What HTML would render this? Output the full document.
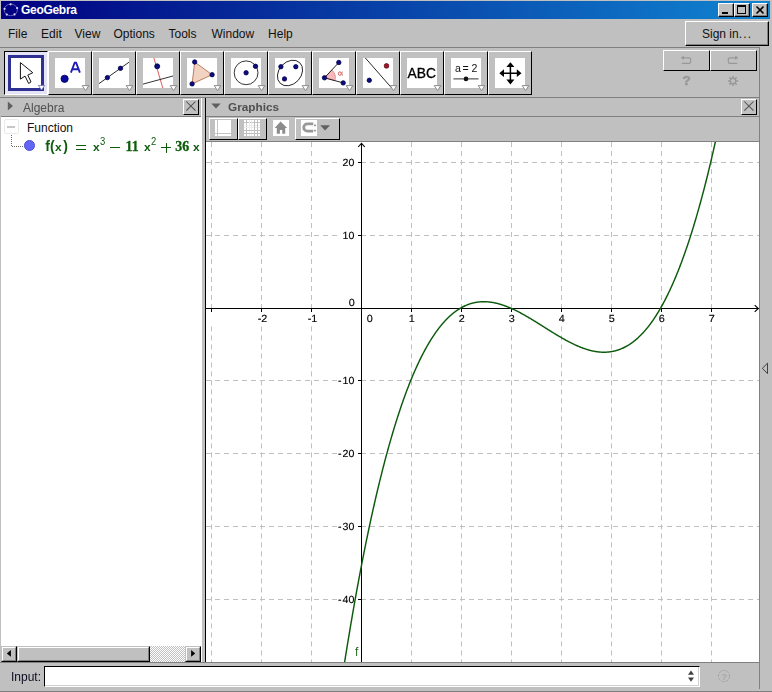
<!DOCTYPE html>
<html><head><meta charset="utf-8"><title>GeoGebra</title>
<style>
*{margin:0;padding:0;box-sizing:border-box}
html,body{width:772px;height:692px;overflow:hidden;background:#c0c0c0}
body{position:relative;font-family:"Liberation Sans",sans-serif;font-size:12px;color:#111}
.a{position:absolute}
.t{position:absolute;white-space:nowrap;line-height:1}
.raised{position:absolute;border-top:1px solid #fff;border-left:1px solid #fff;border-right:1px solid #000;border-bottom:1px solid #000;background:#c0c0c0}
.sunk{position:absolute;border-top:1px solid #000;border-left:1px solid #000;border-right:1px solid #fff;border-bottom:1px solid #fff}
.ln{position:absolute;background:#808080}
svg{position:absolute;overflow:visible}
</style></head>
<body>
<div class="a" style="left:1px;top:1px;width:769px;height:18px;background:linear-gradient(to right,#000080,#1084d0)"></div>
<svg style="left:2px;top:2px" width="18" height="16" viewBox="0 0 18 16"><ellipse cx="8.8" cy="7.9" rx="6.6" ry="5.8" fill="none" stroke="#6a6ab8" stroke-width="0.9"/><circle cx="8.6" cy="2.3" r="1.1" fill="#d8d8ff"/><circle cx="15.1" cy="6.1" r="1.1" fill="#d8d8ff"/><circle cx="12.5" cy="12.4" r="1.1" fill="#d8d8ff"/><circle cx="4.8" cy="12.6" r="1.1" fill="#d8d8ff"/><circle cx="2.6" cy="6.8" r="1.1" fill="#d8d8ff"/></svg>
<div class="t" style="left:21px;top:4px;font-size:12px;letter-spacing:-0.3px;font-weight:bold;color:#fff">GeoGebra</div>
<div class="a" style="left:718px;top:3px;width:16px;height:14px;background:#c0c0c0;border-top:1px solid #fff;border-left:1px solid #fff;border-right:1px solid #000;border-bottom:1px solid #000"><div class="a" style="left:0;top:0;width:14px;height:12px;border-right:1px solid #808080;border-bottom:1px solid #808080"></div><div class="a" style="left:3px;top:8px;width:6px;height:2px;background:#000"></div></div>
<div class="a" style="left:734px;top:3px;width:16px;height:14px;background:#c0c0c0;border-top:1px solid #fff;border-left:1px solid #fff;border-right:1px solid #000;border-bottom:1px solid #000"><div class="a" style="left:0;top:0;width:14px;height:12px;border-right:1px solid #808080;border-bottom:1px solid #808080"></div><div class="a" style="left:2px;top:1px;width:9px;height:9px;border:1px solid #000;border-top:2px solid #000"></div></div>
<div class="a" style="left:752px;top:3px;width:16px;height:14px;background:#c0c0c0;border-top:1px solid #fff;border-left:1px solid #fff;border-right:1px solid #000;border-bottom:1px solid #000"><div class="a" style="left:0;top:0;width:14px;height:12px;border-right:1px solid #808080;border-bottom:1px solid #808080"></div><svg style="left:0;top:0" width="14" height="12"><path d="M3.5 2.5 L10.5 9.5 M10.5 2.5 L3.5 9.5" stroke="#000" stroke-width="1.6" fill="none"/></svg></div>
<div class="t" style="left:8.0px;top:28px;font-size:12px">File</div>
<div class="t" style="left:41.1px;top:28px;font-size:12px">Edit</div>
<div class="t" style="left:74.5px;top:28px;font-size:12px">View</div>
<div class="t" style="left:113.5px;top:28px;font-size:12px">Options</div>
<div class="t" style="left:168.5px;top:28px;font-size:12px">Tools</div>
<div class="t" style="left:211.5px;top:28px;font-size:12px">Window</div>
<div class="t" style="left:268.1px;top:28px;font-size:12px">Help</div>
<div class="raised" style="left:685px;top:21px;width:84px;height:25px"><div class="a" style="left:0;top:0;right:0;bottom:0;border-right:1px solid #808080;border-bottom:1px solid #808080"></div></div>
<div class="t" style="left:702px;top:28px;font-size:12px">Sign in<span style="letter-spacing:1.2px">...</span></div>
<div class="ln" style="left:0;top:47px;width:760px;height:1px"></div>
<div class="ln" style="left:0;top:97px;width:760px;height:1px"></div>
<div class="ln" style="left:759px;top:47px;width:1px;height:642px"></div>
<div class="sunk" style="left:4px;top:51px;width:44px;height:44px;background:#e4e4f6"><div class="a" style="left:3px;top:3px;width:36px;height:36px;border:3px solid #2e3092;background:#fff"></div><svg style="left:6px;top:6px;will-change:transform" width="30" height="30" viewBox="0 0 30 30"><path d="M9.4 4.6 L9.4 21.1 L14.0 18.1 L17.7 25.5 L20.0 23.9 L16.8 17.1 L21.8 14.7 Z" fill="#fff" stroke="#111" stroke-width="1" stroke-linejoin="miter"/></svg><svg style="left:-1px;top:-1px" width="44" height="44" viewBox="0 0 44 44"><path d="M34.3 34.5 L40.7 34.5 L37.5 39 Z" fill="#fff" stroke="#7a7ab8" stroke-width="0.9"/></svg></div>
<div class="raised" style="left:48px;top:51px;width:44px;height:44px"><div class="a" style="left:6px;top:6px;width:30px;height:30px;background:#fff"></div><svg style="left:6px;top:6px;will-change:transform" width="30" height="30" viewBox="0 0 30 30"><circle cx="9.6" cy="20.8" r="3.6" fill="#0a0aa0" stroke="#000060" stroke-width="0.9"/><path d="M15.9 14.7 L19.7 4.6 L21.1 4.6 L24.9 14.7 M17.3 11.2 H23.5" fill="none" stroke="#1c1cb8" stroke-width="1.85" stroke-linejoin="miter"/></svg><svg style="left:-1px;top:-1px" width="44" height="44" viewBox="0 0 44 44"><path d="M34.2 34.6 L40.8 34.6 L37.5 39.6 Z" fill="#fff" stroke="#808080" stroke-width="0.9"/></svg></div>
<div class="raised" style="left:92px;top:51px;width:44px;height:44px"><div class="a" style="left:6px;top:6px;width:30px;height:30px;background:#fff"></div><svg style="left:6px;top:6px;will-change:transform" width="30" height="30" viewBox="0 0 30 30"><path d="M0 25.6 L30 4.2" stroke="#111" stroke-width="0.9"/><circle cx="8.4" cy="19.6" r="2.2" fill="#0c0c80" stroke="#000048" stroke-width="0.8"/><circle cx="21.5" cy="10.3" r="2.2" fill="#0c0c80" stroke="#000048" stroke-width="0.8"/></svg><svg style="left:-1px;top:-1px" width="44" height="44" viewBox="0 0 44 44"><path d="M34.2 34.6 L40.8 34.6 L37.5 39.6 Z" fill="#fff" stroke="#808080" stroke-width="0.9"/></svg></div>
<div class="raised" style="left:136px;top:51px;width:44px;height:44px"><div class="a" style="left:6px;top:6px;width:30px;height:30px;background:#fff"></div><svg style="left:6px;top:6px;will-change:transform" width="30" height="30" viewBox="0 0 30 30"><path d="M10.9 0 L19.8 30" stroke="#d84040" stroke-width="0.85"/><path d="M0 26.1 L30 18" stroke="#111" stroke-width="0.85"/><circle cx="14.2" cy="8.3" r="2.5" fill="#0c0c80" stroke="#000048" stroke-width="0.8"/></svg><svg style="left:-1px;top:-1px" width="44" height="44" viewBox="0 0 44 44"><path d="M34.2 34.6 L40.8 34.6 L37.5 39.6 Z" fill="#fff" stroke="#808080" stroke-width="0.9"/></svg></div>
<div class="raised" style="left:180px;top:51px;width:44px;height:44px"><div class="a" style="left:6px;top:6px;width:30px;height:30px;background:#fff"></div><svg style="left:6px;top:6px;will-change:transform" width="30" height="30" viewBox="0 0 30 30"><path d="M7.7 4 L25.1 16.7 L5.1 25.9 Z" fill="#f2d3c2" stroke="#b06a44" stroke-width="0.85"/><circle cx="7.7" cy="4.0" r="2.2" fill="#0c0c80" stroke="#000048" stroke-width="0.8"/><circle cx="25.1" cy="16.7" r="2.2" fill="#0c0c80" stroke="#000048" stroke-width="0.8"/><circle cx="5.1" cy="25.9" r="2.2" fill="#0c0c80" stroke="#000048" stroke-width="0.8"/></svg><svg style="left:-1px;top:-1px" width="44" height="44" viewBox="0 0 44 44"><path d="M34.2 34.6 L40.8 34.6 L37.5 39.6 Z" fill="#fff" stroke="#808080" stroke-width="0.9"/></svg></div>
<div class="raised" style="left:224px;top:51px;width:44px;height:44px"><div class="a" style="left:6px;top:6px;width:30px;height:30px;background:#fff"></div><svg style="left:6px;top:6px;will-change:transform" width="30" height="30" viewBox="0 0 30 30"><circle cx="15.1" cy="14.8" r="11.9" fill="none" stroke="#111" stroke-width="0.85"/><circle cx="15.1" cy="14.8" r="2.2" fill="#0c0c80" stroke="#000048" stroke-width="0.8"/><circle cx="24.5" cy="8.3" r="2.2" fill="#0c0c80" stroke="#000048" stroke-width="0.8"/></svg><svg style="left:-1px;top:-1px" width="44" height="44" viewBox="0 0 44 44"><path d="M34.2 34.6 L40.8 34.6 L37.5 39.6 Z" fill="#fff" stroke="#808080" stroke-width="0.9"/></svg></div>
<div class="raised" style="left:268px;top:51px;width:44px;height:44px"><div class="a" style="left:6px;top:6px;width:30px;height:30px;background:#fff"></div><svg style="left:6px;top:6px;will-change:transform" width="30" height="30" viewBox="0 0 30 30"><ellipse cx="15" cy="15" rx="14.2" ry="11.0" transform="rotate(-47 15 15)" fill="none" stroke="#111" stroke-width="0.85"/><circle cx="5.9" cy="8.7" r="2.2" fill="#0c0c80" stroke="#000048" stroke-width="0.8"/><circle cx="20.8" cy="8.7" r="2.2" fill="#0c0c80" stroke="#000048" stroke-width="0.8"/><circle cx="9.5" cy="20.9" r="2.2" fill="#0c0c80" stroke="#000048" stroke-width="0.8"/></svg><svg style="left:-1px;top:-1px" width="44" height="44" viewBox="0 0 44 44"><path d="M34.2 34.6 L40.8 34.6 L37.5 39.6 Z" fill="#fff" stroke="#808080" stroke-width="0.9"/></svg></div>
<div class="raised" style="left:312px;top:51px;width:44px;height:44px"><div class="a" style="left:6px;top:6px;width:30px;height:30px;background:#fff"></div><svg style="left:6px;top:6px;will-change:transform" width="30" height="30" viewBox="0 0 30 30"><path d="M5.5 19.8 L12.87 11.91 A10.8 10.8 0 0 1 15.92 22.64 Z" fill="#f6b8b8" stroke="#dc8080" stroke-width="0.8"/><path d="M19.8 4.5 L5.5 19.8 L24.2 24.9" fill="none" stroke="#111" stroke-width="0.9"/><circle cx="5.5" cy="19.8" r="2.2" fill="#0c0c80" stroke="#000048" stroke-width="0.8"/><circle cx="19.8" cy="4.5" r="2.2" fill="#0c0c80" stroke="#000048" stroke-width="0.8"/><circle cx="24.2" cy="24.9" r="2.2" fill="#0c0c80" stroke="#000048" stroke-width="0.8"/><ellipse cx="20.8" cy="15.6" rx="1.45" ry="1.75" fill="none" stroke="#cc4848" stroke-width="0.9"/><path d="M23.2 13.6 Q22.3 15.6 23.5 17.5" fill="none" stroke="#cc4848" stroke-width="0.8"/></svg><svg style="left:-1px;top:-1px" width="44" height="44" viewBox="0 0 44 44"><path d="M34.2 34.6 L40.8 34.6 L37.5 39.6 Z" fill="#fff" stroke="#808080" stroke-width="0.9"/></svg></div>
<div class="raised" style="left:356px;top:51px;width:44px;height:44px"><div class="a" style="left:6px;top:6px;width:30px;height:30px;background:#fff"></div><svg style="left:6px;top:6px;will-change:transform" width="30" height="30" viewBox="0 0 30 30"><path d="M2.4 0 L28.7 30" stroke="#111" stroke-width="0.9"/><circle cx="23.5" cy="7.9" r="2.3" fill="#a01828" stroke="#600010" stroke-width="0.8"/><circle cx="6.3" cy="22.3" r="2.2" fill="#0c0c80" stroke="#000048" stroke-width="0.8"/></svg><svg style="left:-1px;top:-1px" width="44" height="44" viewBox="0 0 44 44"><path d="M34.2 34.6 L40.8 34.6 L37.5 39.6 Z" fill="#fff" stroke="#808080" stroke-width="0.9"/></svg></div>
<div class="raised" style="left:400px;top:51px;width:44px;height:44px"><div class="a" style="left:6px;top:6px;width:30px;height:30px;background:#fff"></div><svg style="left:6px;top:6px;will-change:transform" width="30" height="30" viewBox="0 0 30 30"><text x="0.6" y="19.9" font-family="Liberation Sans" font-size="13.8" fill="#000" stroke="#000" stroke-width="0.3">ABC</text></svg><svg style="left:-1px;top:-1px" width="44" height="44" viewBox="0 0 44 44"><path d="M34.2 34.6 L40.8 34.6 L37.5 39.6 Z" fill="#fff" stroke="#808080" stroke-width="0.9"/></svg></div>
<div class="raised" style="left:444px;top:51px;width:44px;height:44px"><div class="a" style="left:6px;top:6px;width:30px;height:30px;background:#fff"></div><svg style="left:6px;top:6px;will-change:transform" width="30" height="30" viewBox="0 0 30 30"><text x="3.9" y="14" font-family="Liberation Sans" font-size="10.6" fill="#111">a</text><text x="11.6" y="13.6" font-family="Liberation Sans" font-size="10.6" fill="#111">=</text><text x="20.6" y="14" font-family="Liberation Sans" font-size="10.6" fill="#111">2</text><path d="M2.4 20.9 L27.5 20.9" stroke="#333" stroke-width="1"/><circle cx="15" cy="20.9" r="2.3" fill="#111"/></svg><svg style="left:-1px;top:-1px" width="44" height="44" viewBox="0 0 44 44"><path d="M34.2 34.6 L40.8 34.6 L37.5 39.6 Z" fill="#fff" stroke="#808080" stroke-width="0.9"/></svg></div>
<div class="raised" style="left:488px;top:51px;width:44px;height:44px"><div class="a" style="left:6px;top:6px;width:30px;height:30px;background:#fff"></div><svg style="left:6px;top:6px;will-change:transform" width="30" height="30" viewBox="0 0 30 30"><path d="M15.4 6 L15.4 25 M6 15.2 L25 15.2" stroke="#000" stroke-width="1.5"/><path d="M15.4 4.2 L19.4 9 L11.4 9 Z M15.4 26.4 L19.4 21.6 L11.4 21.6 Z M4.3 15.2 L9 11.3 L9 19.1 Z M26.5 15.2 L21.8 11.3 L21.8 19.1 Z" fill="#000"/></svg><svg style="left:-1px;top:-1px" width="44" height="44" viewBox="0 0 44 44"><path d="M34.2 34.6 L40.8 34.6 L37.5 39.6 Z" fill="#fff" stroke="#808080" stroke-width="0.9"/></svg></div>
<div class="raised" style="left:663px;top:50px;width:47px;height:21px"></div>
<div class="raised" style="left:710px;top:50px;width:47px;height:21px"></div>
<svg style="left:680px;top:55px" width="12" height="10" viewBox="0 0 12 10"><path d="M3.5 2.8 H9 Q10.7 2.8 10.7 4.4 V6.7 Q10.7 8.3 9 8.3 H1.8" fill="none" stroke="#989898" stroke-width="1.2"/><path d="M0.7 2.8 L3.9 0.6 L3.9 5 Z" fill="#989898"/></svg>
<svg style="left:727px;top:55px" width="12" height="10" viewBox="0 0 12 10"><path d="M8.5 2.8 H3 Q1.3 2.8 1.3 4.4 V6.7 Q1.3 8.3 3 8.3 H10.2" fill="none" stroke="#989898" stroke-width="1.2"/><path d="M11.3 2.8 L8.1 0.6 L8.1 5 Z" fill="#989898"/></svg>
<div class="t" style="left:682.6px;top:73.5px;font-size:13.5px;font-weight:bold;color:#989898;-webkit-text-stroke:0.5px #989898">?</div>
<svg style="left:727px;top:75px" width="12" height="12" viewBox="0 0 12 12"><path d="M8.80 6.00 L11.10 6.00 M7.98 7.98 L9.61 9.61 M6.00 8.80 L6.00 11.10 M4.02 7.98 L2.39 9.61 M3.20 6.00 L0.90 6.00 M4.02 4.02 L2.39 2.39 M6.00 3.20 L6.00 0.90 M7.98 4.02 L9.61 2.39 " stroke="#989898" stroke-width="1.5" fill="none"/><circle cx="6" cy="6" r="2.7" fill="#c0c0c0" stroke="#989898" stroke-width="1.3"/></svg>
<svg style="left:7px;top:101px" width="7" height="10" viewBox="0 0 7 10"><path d="M0.8 0.4 L6 5 L0.8 9.6 Z" fill="#606060"/></svg>
<div class="t" style="left:23px;top:102px;font-size:12px;color:#505050">Algebra</div>
<div class="raised" style="left:183px;top:99px;width:16px;height:16px"><svg style="left:0;top:0" width="14" height="14"><path d="M2.3 1.5 L11.5 10.7 M11.5 1.5 L2.3 10.7" stroke="#505050" stroke-width="1.05" fill="none"/></svg></div>
<div class="ln" style="left:1px;top:116px;width:200px;height:1px"></div>
<div class="a" style="left:1px;top:117px;width:201px;height:545px;background:#fff"></div>
<div class="a" style="left:4px;top:119px;width:15px;height:15px;border:1px solid #eaeaea;border-radius:2px"></div>
<div class="a" style="left:7px;top:126px;width:8px;height:2px;background:#c8c8c8"></div>
<div class="t" style="left:27px;top:122px;font-size:12px;color:#111">Function</div>
<svg style="left:0;top:0" width="30" height="160"><path d="M11.5 135 L11.5 146.5 L23 146.5" fill="none" stroke="#6c6c6c" stroke-width="1" stroke-dasharray="1 1"/></svg>
<div class="a" style="left:24.3px;top:140.2px;width:10.6px;height:10.6px;border-radius:50%;background:#6565f5;border:0.6px solid #5050d0"></div>
<div class="t" style="left:45.3px;top:136.0px;font-size:14.0px;line-height:20px;height:20px;font-family:'Liberation Sans',sans-serif;font-weight:bold;color:#0c5c0c;">f</div>
<div class="t" style="left:50.0px;top:136.0px;font-size:14.0px;line-height:20px;height:20px;font-family:'Liberation Sans',sans-serif;font-weight:bold;color:#0c5c0c;">(</div>
<div class="t" style="left:55.4px;top:136.9px;font-size:11.5px;line-height:20px;height:20px;font-family:'Liberation Sans',sans-serif;font-weight:bold;color:#0c5c0c;transform:scaleX(1.04);transform-origin:0 50%;">x</div>
<div class="t" style="left:63.3px;top:136.0px;font-size:14.0px;line-height:20px;height:20px;font-family:'Liberation Sans',sans-serif;font-weight:bold;color:#0c5c0c;">)</div>
<div class="a" style="left:76px;top:145px;width:10px;height:1px;background:#0c5c0c"></div><div class="a" style="left:76px;top:149px;width:10px;height:1px;background:#0c5c0c"></div>
<div class="t" style="left:92.8px;top:136.9px;font-size:11.5px;line-height:20px;height:20px;font-family:'Liberation Sans',sans-serif;font-weight:bold;color:#0c5c0c;transform:scaleX(1.04);transform-origin:0 50%;">x</div>
<div class="t" style="left:99.9px;top:131.9px;font-size:8.6px;line-height:20px;height:20px;font-family:'Liberation Sans',sans-serif;color:#0c5c0c;transform:scale(1.1,1.26);transform-origin:0% 65%;">3</div>
<div class="a" style="left:110px;top:147px;width:10px;height:1px;background:#0c5c0c"></div>
<div class="t" style="left:125.6px;top:136.7px;font-size:13.9px;line-height:20px;height:20px;font-family:'Liberation Serif',serif;font-weight:bold;color:#0c5c0c;-webkit-text-stroke:0.3px #0c5c0c;">11</div>
<div class="t" style="left:143.6px;top:136.9px;font-size:11.5px;line-height:20px;height:20px;font-family:'Liberation Sans',sans-serif;font-weight:bold;color:#0c5c0c;transform:scaleX(1.04);transform-origin:0 50%;">x</div>
<div class="t" style="left:151.3px;top:131.9px;font-size:8.6px;line-height:20px;height:20px;font-family:'Liberation Sans',sans-serif;color:#0c5c0c;transform:scale(1.1,1.26);transform-origin:0% 65%;">2</div>
<div class="a" style="left:161px;top:147px;width:10px;height:1px;background:#0c5c0c"></div><div class="a" style="left:165.5px;top:142.5px;width:1px;height:10px;background:#0c5c0c"></div>
<div class="t" style="left:175.2px;top:136.7px;font-size:13.9px;line-height:20px;height:20px;font-family:'Liberation Serif',serif;font-weight:bold;color:#0c5c0c;-webkit-text-stroke:0.3px #0c5c0c;">36</div>
<div class="t" style="left:193.1px;top:136.9px;font-size:11.5px;line-height:20px;height:20px;font-family:'Liberation Sans',sans-serif;font-weight:bold;color:#0c5c0c;transform:scaleX(1.04);transform-origin:0 50%;">x</div>
<div class="a" style="left:1px;top:646px;width:200px;height:16px;background:#c0c0c0"></div>
<div class="a" style="left:150px;top:646px;width:35px;height:16px;background-color:#fff;background-image:linear-gradient(45deg,#c0c0c0 25%,transparent 25%,transparent 75%,#c0c0c0 75%),linear-gradient(45deg,#c0c0c0 25%,transparent 25%,transparent 75%,#c0c0c0 75%);background-size:2px 2px;background-position:0 0,1px 1px"></div>
<div style="position:absolute;top:646px;height:16px;background:#c0c0c0;border-top:1px solid #c0c0c0;border-left:1px solid #c0c0c0;border-right:1px solid #000;border-bottom:1px solid #000;left:1px;width:16px"><div class="a" style="left:0;top:0;right:0;bottom:0;border-top:1px solid #fff;border-left:1px solid #fff;border-right:1px solid #808080;border-bottom:1px solid #808080"></div><svg style="left:0;top:0" width="14" height="14"><path d="M4.8 6.4 L8.9 3 L8.9 9.8 Z" fill="#000"/></svg></div>
<div style="position:absolute;top:646px;height:16px;background:#c0c0c0;border-top:1px solid #c0c0c0;border-left:1px solid #c0c0c0;border-right:1px solid #000;border-bottom:1px solid #000;left:17px;width:133px"><div class="a" style="left:0;top:0;right:0;bottom:0;border-top:1px solid #fff;border-left:1px solid #fff;border-right:1px solid #808080;border-bottom:1px solid #808080"></div></div>
<div style="position:absolute;top:646px;height:16px;background:#c0c0c0;border-top:1px solid #c0c0c0;border-left:1px solid #c0c0c0;border-right:1px solid #000;border-bottom:1px solid #000;left:185px;width:16px"><div class="a" style="left:0;top:0;right:0;bottom:0;border-top:1px solid #fff;border-left:1px solid #fff;border-right:1px solid #808080;border-bottom:1px solid #808080"></div><svg style="left:0;top:0" width="14" height="14"><path d="M9.2 6.4 L5.1 3 L5.1 9.8 Z" fill="#000"/></svg></div>
<div class="a" style="left:201px;top:98px;width:1px;height:564px;background:#fff"></div>
<div class="a" style="left:205px;top:98px;width:1px;height:564px;background:#000"></div>
<svg style="left:211px;top:103px" width="10" height="6" viewBox="0 0 10 6"><path d="M0.3 0.5 L9.7 0.5 L5 5.4 Z" fill="#606060"/></svg>
<div class="t" style="left:228px;top:102px;font-size:11.8px;font-weight:bold;color:#505050">Graphics</div>
<div class="raised" style="left:741px;top:99px;width:16px;height:16px"><svg style="left:0;top:0" width="14" height="14"><path d="M2.3 1.5 L11.5 10.7 M11.5 1.5 L2.3 10.7" stroke="#505050" stroke-width="1.05" fill="none"/></svg></div>
<div class="ln" style="left:206px;top:116px;width:553px;height:1px"></div>
<div class="raised" style="left:209px;top:118px;width:29px;height:22px"><div class="a" style="left:5px;top:1px;width:16px;height:16px;background:#fff"></div><div class="a" style="left:7px;top:1px;width:1px;height:16px;background:#c4c4c4"></div><div class="a" style="left:5px;top:14px;width:16px;height:1px;background:#c4c4c4"></div></div>
<div class="raised" style="left:238px;top:118px;width:29px;height:22px"><div class="a" style="left:5px;top:1px;width:16px;height:16px;background:#fff"></div><div class="a" style="left:7px;top:1px;width:1px;height:16px;background:#c0c0c0"></div><div class="a" style="left:5px;top:3px;width:16px;height:1px;background:#c0c0c0"></div><div class="a" style="left:10px;top:1px;width:1px;height:16px;background:#ececec"></div><div class="a" style="left:5px;top:6px;width:16px;height:1px;background:#ececec"></div><div class="a" style="left:12px;top:1px;width:1px;height:16px;background:#ececec"></div><div class="a" style="left:5px;top:8px;width:16px;height:1px;background:#ececec"></div><div class="a" style="left:15px;top:1px;width:1px;height:16px;background:#c0c0c0"></div><div class="a" style="left:5px;top:11px;width:16px;height:1px;background:#c0c0c0"></div><div class="a" style="left:18px;top:1px;width:1px;height:16px;background:#c0c0c0"></div><div class="a" style="left:5px;top:14px;width:16px;height:1px;background:#c0c0c0"></div></div>
<div class="a" style="left:273px;top:120px;width:16px;height:16px;background:#fff"><svg style="left:0;top:0" width="16" height="16"><path d="M7.5 1.6 L14.2 8 L12.2 8 L12.2 13.7 L9.3 13.7 L9.3 10 L6.9 10 L6.9 13.7 L3.8 13.7 L3.8 8 L1.7 8 Z" fill="#8c8c8c"/></svg></div>
<div class="raised" style="left:295px;top:118px;width:45px;height:22px"><div class="a" style="left:5px;top:1px;width:16px;height:16px;background:#fff"></div><svg style="left:5px;top:1px" width="16" height="16"><path d="M12.3 3.8 H6.4 A3.7 3.7 0 0 0 6.4 11.2 H12.3" fill="none" stroke="#989898" stroke-width="2.8"/><rect x="13" y="4.6" width="2" height="1.6" fill="#989898"/><rect x="13" y="9.8" width="2" height="1.6" fill="#989898"/></svg><svg style="left:24px;top:6px" width="11" height="6"><path d="M0.2 0.3 L10 0.3 L5.1 5.4 Z" fill="#606060"/></svg></div>
<div class="ln" style="left:206px;top:141px;width:553px;height:1px"></div>
<svg style="left:206px;top:142px" width="553" height="520" viewBox="0 0 553 520"><rect x="0" y="0" width="553" height="520" fill="#fff"/><path d="M5.5 0 V166.5 M5.5 184.4 V520 M55.5 0 V166.5 M55.5 184.4 V520 M105.5 0 V166.5 M105.5 184.4 V520 M205.5 0 V166.5 M205.5 184.4 V520 M255.5 0 V166.5 M255.5 184.4 V520 M305.5 0 V166.5 M305.5 184.4 V520 M355.5 0 V166.5 M355.5 184.4 V520 M405.5 0 V166.5 M405.5 184.4 V520 M455.5 0 V166.5 M455.5 184.4 V520 M505.5 0 V166.5 M505.5 184.4 V520 M0 20.5 H132.0 M155.0 20.5 H553 M0 93.5 H132.0 M155.0 93.5 H553 M0 238.5 H132.0 M155.0 238.5 H553 M0 311.5 H132.0 M155.0 311.5 H553 M0 384.5 H132.0 M155.0 384.5 H553 M0 457.5 H132.0 M155.0 457.5 H553 " stroke="#c0c0c0" stroke-width="1" stroke-dasharray="5 4" fill="none"/><path d="M155.5 1.5 V520 M0 166.5 H552.5" stroke="#000" stroke-width="1" fill="none" shape-rendering="crispEdges"/><path d="M152.2 5 L155.5 1.3 L158.8 5 M548.7 163.1 L552.3 166.5 L548.7 169.9" stroke="#000" stroke-width="1.1" fill="none"/><path d="M5.5 166.5 v3.5 M55.5 166.5 v3.5 M105.5 166.5 v3.5 M205.5 166.5 v3.5 M255.5 166.5 v3.5 M305.5 166.5 v3.5 M355.5 166.5 v3.5 M405.5 166.5 v3.5 M455.5 166.5 v3.5 M505.5 166.5 v3.5 M155.5 20.5 h-3.5 M155.5 93.5 h-3.5 M155.5 238.5 h-3.5 M155.5 311.5 h-3.5 M155.5 384.5 h-3.5 M155.5 457.5 h-3.5 " stroke="#000" stroke-width="1" fill="none" shape-rendering="crispEdges"/></svg>
<div class="a" style="left:0;top:0;width:772px;height:692px;will-change:transform">
<div class="t" style="left:257.8px;top:315px;font-size:10.3px;color:#000;-webkit-text-stroke:0.15px #000;text-rendering:geometricPrecision;transform:scale(1.05,1)">-2</div>
<div class="t" style="left:307.8px;top:315px;font-size:10.3px;color:#000;-webkit-text-stroke:0.15px #000;text-rendering:geometricPrecision;transform:scale(1.05,1)">-1</div>
<div class="t" style="left:408.7px;top:315px;font-size:10.3px;color:#000;-webkit-text-stroke:0.15px #000;text-rendering:geometricPrecision;transform:scale(1.05,1)">1</div>
<div class="t" style="left:458.7px;top:315px;font-size:10.3px;color:#000;-webkit-text-stroke:0.15px #000;text-rendering:geometricPrecision;transform:scale(1.05,1)">2</div>
<div class="t" style="left:508.7px;top:315px;font-size:10.3px;color:#000;-webkit-text-stroke:0.15px #000;text-rendering:geometricPrecision;transform:scale(1.05,1)">3</div>
<div class="t" style="left:558.7px;top:315px;font-size:10.3px;color:#000;-webkit-text-stroke:0.15px #000;text-rendering:geometricPrecision;transform:scale(1.05,1)">4</div>
<div class="t" style="left:608.7px;top:315px;font-size:10.3px;color:#000;-webkit-text-stroke:0.15px #000;text-rendering:geometricPrecision;transform:scale(1.05,1)">5</div>
<div class="t" style="left:658.7px;top:315px;font-size:10.3px;color:#000;-webkit-text-stroke:0.15px #000;text-rendering:geometricPrecision;transform:scale(1.05,1)">6</div>
<div class="t" style="left:708.7px;top:315px;font-size:10.3px;color:#000;-webkit-text-stroke:0.15px #000;text-rendering:geometricPrecision;transform:scale(1.05,1)">7</div>
<div class="t" style="left:367.0px;top:315px;font-size:10.3px;color:#000;-webkit-text-stroke:0.15px #000;text-rendering:geometricPrecision;transform:scale(1.05,1)">0</div>
<div class="t" style="left:348.8px;top:299px;font-size:10.3px;color:#000;-webkit-text-stroke:0.15px #000;text-rendering:geometricPrecision;transform:scale(1.05,1)">0</div>
<div class="t" style="left:315px;top:158.5px;width:39.4px;text-align:right;font-size:10.3px;color:#000;-webkit-text-stroke:0.15px #000;text-rendering:geometricPrecision;transform:scale(1.03,1);transform-origin:100% 50%">20</div>
<div class="t" style="left:315px;top:231.5px;width:39.4px;text-align:right;font-size:10.3px;color:#000;-webkit-text-stroke:0.15px #000;text-rendering:geometricPrecision;transform:scale(1.03,1);transform-origin:100% 50%">10</div>
<div class="t" style="left:315px;top:376.5px;width:39.4px;text-align:right;font-size:10.3px;color:#000;-webkit-text-stroke:0.15px #000;text-rendering:geometricPrecision;transform:scale(1.03,1);transform-origin:100% 50%"><span style="letter-spacing:1px">-</span>10</div>
<div class="t" style="left:315px;top:449.5px;width:39.4px;text-align:right;font-size:10.3px;color:#000;-webkit-text-stroke:0.15px #000;text-rendering:geometricPrecision;transform:scale(1.03,1);transform-origin:100% 50%"><span style="letter-spacing:1px">-</span>20</div>
<div class="t" style="left:315px;top:522.5px;width:39.4px;text-align:right;font-size:10.3px;color:#000;-webkit-text-stroke:0.15px #000;text-rendering:geometricPrecision;transform:scale(1.03,1);transform-origin:100% 50%"><span style="letter-spacing:1px">-</span>30</div>
<div class="t" style="left:315px;top:595.5px;width:39.4px;text-align:right;font-size:10.3px;color:#000;-webkit-text-stroke:0.15px #000;text-rendering:geometricPrecision;transform:scale(1.03,1);transform-origin:100% 50%"><span style="letter-spacing:1px">-</span>40</div>
<div class="t" style="left:355px;top:646px;font-size:12px;color:#2a682a">f</div>
</div>
<svg style="left:206px;top:142px;overflow:hidden" width="553" height="520" viewBox="0 0 553 520"><path d="M134.60 546.03 L135.10 542.74 L135.60 539.48 L136.10 536.23 L136.60 532.99 L137.10 529.78 L137.60 526.58 L138.10 523.40 L138.60 520.24 L139.10 517.10 L139.60 513.97 L140.10 510.86 L140.60 507.77 L141.10 504.69 L141.60 501.63 L142.10 498.59 L142.60 495.57 L143.10 492.56 L143.60 489.57 L144.10 486.60 L144.60 483.64 L145.10 480.70 L145.60 477.78 L146.10 474.87 L146.60 471.98 L147.10 469.11 L147.60 466.25 L148.10 463.42 L148.60 460.59 L149.10 457.79 L149.60 455.00 L150.10 452.22 L150.60 449.47 L151.10 446.73 L151.60 444.00 L152.10 441.30 L152.60 438.60 L153.10 435.93 L153.60 433.27 L154.10 430.63 L154.60 428.00 L155.10 425.39 L155.60 422.79 L156.10 420.21 L156.60 417.65 L157.10 415.10 L157.60 412.57 L158.10 410.06 L158.60 407.56 L159.10 405.07 L159.60 402.60 L160.10 400.15 L160.60 397.71 L161.10 395.29 L161.60 392.88 L162.10 390.49 L162.60 388.11 L163.10 385.75 L163.60 383.41 L164.10 381.08 L164.60 378.76 L165.10 376.46 L165.60 374.18 L166.10 371.91 L166.60 369.65 L167.10 367.41 L167.60 365.19 L168.10 362.98 L168.60 360.78 L169.10 358.60 L169.60 356.44 L170.10 354.28 L170.60 352.15 L171.10 350.03 L171.60 347.92 L172.10 345.83 L172.60 343.75 L173.10 341.68 L173.60 339.63 L174.10 337.60 L174.60 335.58 L175.10 333.57 L175.60 331.58 L176.10 329.60 L176.60 327.64 L177.10 325.69 L177.60 323.75 L178.10 321.83 L178.60 319.92 L179.10 318.03 L179.60 316.15 L180.10 314.28 L180.60 312.43 L181.10 310.59 L181.60 308.76 L182.10 306.95 L182.60 305.15 L183.10 303.37 L183.60 301.60 L184.10 299.84 L184.60 298.10 L185.10 296.37 L185.60 294.65 L186.10 292.95 L186.60 291.26 L187.10 289.58 L187.60 287.91 L188.10 286.26 L188.60 284.62 L189.10 283.00 L189.60 281.39 L190.10 279.79 L190.60 278.20 L191.10 276.63 L191.60 275.07 L192.10 273.52 L192.60 271.98 L193.10 270.46 L193.60 268.95 L194.10 267.46 L194.60 265.97 L195.10 264.50 L195.60 263.04 L196.10 261.59 L196.60 260.16 L197.10 258.74 L197.60 257.33 L198.10 255.93 L198.60 254.54 L199.10 253.17 L199.60 251.81 L200.10 250.46 L200.60 249.12 L201.10 247.79 L201.60 246.48 L202.10 245.18 L202.60 243.89 L203.10 242.61 L203.60 241.35 L204.10 240.09 L204.60 238.85 L205.10 237.62 L205.60 236.40 L206.10 235.19 L206.60 234.00 L207.10 232.81 L207.60 231.64 L208.10 230.48 L208.60 229.32 L209.10 228.19 L209.60 227.06 L210.10 225.94 L210.60 224.83 L211.10 223.74 L211.60 222.66 L212.10 221.58 L212.60 220.52 L213.10 219.47 L213.60 218.43 L214.10 217.40 L214.60 216.38 L215.10 215.38 L215.60 214.38 L216.10 213.40 L216.60 212.42 L217.10 211.46 L217.60 210.50 L218.10 209.56 L218.60 208.62 L219.10 207.70 L219.60 206.79 L220.10 205.89 L220.60 205.00 L221.10 204.11 L221.60 203.24 L222.10 202.38 L222.60 201.53 L223.10 200.69 L223.60 199.86 L224.10 199.04 L224.60 198.23 L225.10 197.43 L225.60 196.63 L226.10 195.85 L226.60 195.08 L227.10 194.32 L227.60 193.57 L228.10 192.82 L228.60 192.09 L229.10 191.37 L229.60 190.65 L230.10 189.95 L230.60 189.25 L231.10 188.57 L231.60 187.89 L232.10 187.22 L232.60 186.57 L233.10 185.92 L233.60 185.28 L234.10 184.65 L234.60 184.03 L235.10 183.41 L235.60 182.81 L236.10 182.22 L236.60 181.63 L237.10 181.05 L237.60 180.48 L238.10 179.93 L238.60 179.38 L239.10 178.83 L239.60 178.30 L240.10 177.78 L240.60 177.26 L241.10 176.75 L241.60 176.25 L242.10 175.76 L242.60 175.28 L243.10 174.81 L243.60 174.34 L244.10 173.88 L244.60 173.43 L245.10 172.99 L245.60 172.56 L246.10 172.13 L246.60 171.72 L247.10 171.31 L247.60 170.91 L248.10 170.51 L248.60 170.13 L249.10 169.75 L249.60 169.38 L250.10 169.02 L250.60 168.66 L251.10 168.32 L251.60 167.98 L252.10 167.65 L252.60 167.32 L253.10 167.01 L253.60 166.70 L254.10 166.39 L254.60 166.10 L255.10 165.81 L255.60 165.53 L256.10 165.26 L256.60 164.99 L257.10 164.74 L257.60 164.48 L258.10 164.24 L258.60 164.00 L259.10 163.77 L259.60 163.55 L260.10 163.33 L260.60 163.12 L261.10 162.92 L261.60 162.72 L262.10 162.53 L262.60 162.35 L263.10 162.17 L263.60 162.00 L264.10 161.83 L264.60 161.68 L265.10 161.53 L265.60 161.38 L266.10 161.24 L266.60 161.11 L267.10 160.98 L267.60 160.87 L268.10 160.75 L268.60 160.64 L269.10 160.54 L269.60 160.45 L270.10 160.36 L270.60 160.27 L271.10 160.20 L271.60 160.13 L272.10 160.06 L272.60 160.00 L273.10 159.94 L273.60 159.90 L274.10 159.85 L274.60 159.81 L275.10 159.78 L275.60 159.76 L276.10 159.73 L276.60 159.72 L277.10 159.71 L277.60 159.70 L278.10 159.70 L278.60 159.71 L279.10 159.72 L279.60 159.73 L280.10 159.76 L280.60 159.78 L281.10 159.81 L281.60 159.85 L282.10 159.89 L282.60 159.93 L283.10 159.98 L283.60 160.04 L284.10 160.10 L284.60 160.16 L285.10 160.23 L285.60 160.31 L286.10 160.39 L286.60 160.47 L287.10 160.56 L287.60 160.65 L288.10 160.74 L288.60 160.84 L289.10 160.95 L289.60 161.06 L290.10 161.17 L290.60 161.29 L291.10 161.41 L291.60 161.54 L292.10 161.67 L292.60 161.80 L293.10 161.94 L293.60 162.08 L294.10 162.23 L294.60 162.38 L295.10 162.53 L295.60 162.69 L296.10 162.85 L296.60 163.01 L297.10 163.18 L297.60 163.35 L298.10 163.52 L298.60 163.70 L299.10 163.88 L299.60 164.07 L300.10 164.26 L300.60 164.45 L301.10 164.65 L301.60 164.84 L302.10 165.05 L302.60 165.25 L303.10 165.46 L303.60 165.67 L304.10 165.88 L304.60 166.10 L305.10 166.32 L305.60 166.54 L306.10 166.77 L306.60 167.00 L307.10 167.23 L307.60 167.46 L308.10 167.70 L308.60 167.94 L309.10 168.18 L309.60 168.42 L310.10 168.67 L310.60 168.92 L311.10 169.17 L311.60 169.42 L312.10 169.68 L312.60 169.93 L313.10 170.20 L313.60 170.46 L314.10 170.72 L314.60 170.99 L315.10 171.26 L315.60 171.53 L316.10 171.80 L316.60 172.08 L317.10 172.35 L317.60 172.63 L318.10 172.91 L318.60 173.19 L319.10 173.48 L319.60 173.76 L320.10 174.05 L320.60 174.34 L321.10 174.63 L321.60 174.92 L322.10 175.21 L322.60 175.50 L323.10 175.80 L323.60 176.10 L324.10 176.39 L324.60 176.69 L325.10 176.99 L325.60 177.29 L326.10 177.60 L326.60 177.90 L327.10 178.20 L327.60 178.51 L328.10 178.82 L328.60 179.12 L329.10 179.43 L329.60 179.74 L330.10 180.05 L330.60 180.36 L331.10 180.67 L331.60 180.98 L332.10 181.29 L332.60 181.61 L333.10 181.92 L333.60 182.23 L334.10 182.55 L334.60 182.86 L335.10 183.18 L335.60 183.49 L336.10 183.81 L336.60 184.12 L337.10 184.44 L337.60 184.75 L338.10 185.07 L338.60 185.38 L339.10 185.70 L339.60 186.01 L340.10 186.33 L340.60 186.64 L341.10 186.96 L341.60 187.27 L342.10 187.58 L342.60 187.90 L343.10 188.21 L343.60 188.52 L344.10 188.84 L344.60 189.15 L345.10 189.46 L345.60 189.77 L346.10 190.08 L346.60 190.39 L347.10 190.70 L347.60 191.00 L348.10 191.31 L348.60 191.62 L349.10 191.92 L349.60 192.22 L350.10 192.53 L350.60 192.83 L351.10 193.13 L351.60 193.43 L352.10 193.73 L352.60 194.02 L353.10 194.32 L353.60 194.62 L354.10 194.91 L354.60 195.20 L355.10 195.49 L355.60 195.78 L356.10 196.07 L356.60 196.35 L357.10 196.64 L357.60 196.92 L358.10 197.20 L358.60 197.48 L359.10 197.75 L359.60 198.03 L360.10 198.30 L360.60 198.57 L361.10 198.84 L361.60 199.11 L362.10 199.38 L362.60 199.64 L363.10 199.90 L363.60 200.16 L364.10 200.42 L364.60 200.67 L365.10 200.92 L365.60 201.17 L366.10 201.42 L366.60 201.66 L367.10 201.91 L367.60 202.15 L368.10 202.38 L368.60 202.62 L369.10 202.85 L369.60 203.08 L370.10 203.31 L370.60 203.53 L371.10 203.75 L371.60 203.97 L372.10 204.18 L372.60 204.39 L373.10 204.60 L373.60 204.81 L374.10 205.01 L374.60 205.21 L375.10 205.41 L375.60 205.60 L376.10 205.79 L376.60 205.98 L377.10 206.16 L377.60 206.34 L378.10 206.51 L378.60 206.69 L379.10 206.86 L379.60 207.02 L380.10 207.18 L380.60 207.34 L381.10 207.50 L381.60 207.65 L382.10 207.79 L382.60 207.94 L383.10 208.08 L383.60 208.21 L384.10 208.34 L384.60 208.47 L385.10 208.59 L385.60 208.71 L386.10 208.83 L386.60 208.94 L387.10 209.04 L387.60 209.15 L388.10 209.24 L388.60 209.34 L389.10 209.43 L389.60 209.51 L390.10 209.59 L390.60 209.67 L391.10 209.74 L391.60 209.80 L392.10 209.86 L392.60 209.92 L393.10 209.97 L393.60 210.02 L394.10 210.06 L394.60 210.10 L395.10 210.13 L395.60 210.16 L396.10 210.18 L396.60 210.20 L397.10 210.21 L397.60 210.22 L398.10 210.22 L398.60 210.22 L399.10 210.21 L399.60 210.19 L400.10 210.17 L400.60 210.15 L401.10 210.12 L401.60 210.08 L402.10 210.04 L402.60 209.99 L403.10 209.94 L403.60 209.88 L404.10 209.82 L404.60 209.75 L405.10 209.67 L405.60 209.59 L406.10 209.51 L406.60 209.41 L407.10 209.31 L407.60 209.21 L408.10 209.10 L408.60 208.98 L409.10 208.85 L409.60 208.72 L410.10 208.59 L410.60 208.45 L411.10 208.30 L411.60 208.14 L412.10 207.98 L412.60 207.81 L413.10 207.64 L413.60 207.46 L414.10 207.27 L414.60 207.07 L415.10 206.87 L415.60 206.66 L416.10 206.45 L416.60 206.23 L417.10 206.00 L417.60 205.76 L418.10 205.52 L418.60 205.27 L419.10 205.02 L419.60 204.75 L420.10 204.48 L420.60 204.20 L421.10 203.92 L421.60 203.63 L422.10 203.33 L422.60 203.02 L423.10 202.71 L423.60 202.38 L424.10 202.06 L424.60 201.72 L425.10 201.37 L425.60 201.02 L426.10 200.66 L426.60 200.30 L427.10 199.92 L427.60 199.54 L428.10 199.15 L428.60 198.75 L429.10 198.34 L429.60 197.93 L430.10 197.51 L430.60 197.08 L431.10 196.64 L431.60 196.19 L432.10 195.74 L432.60 195.27 L433.10 194.80 L433.60 194.32 L434.10 193.83 L434.60 193.34 L435.10 192.83 L435.60 192.32 L436.10 191.80 L436.60 191.27 L437.10 190.73 L437.60 190.18 L438.10 189.62 L438.60 189.06 L439.10 188.49 L439.60 187.90 L440.10 187.31 L440.60 186.71 L441.10 186.10 L441.60 185.48 L442.10 184.86 L442.60 184.22 L443.10 183.57 L443.60 182.92 L444.10 182.25 L444.60 181.58 L445.10 180.90 L445.60 180.21 L446.10 179.51 L446.60 178.79 L447.10 178.07 L447.60 177.34 L448.10 176.60 L448.60 175.86 L449.10 175.10 L449.60 174.33 L450.10 173.55 L450.60 172.76 L451.10 171.96 L451.60 171.16 L452.10 170.34 L452.60 169.51 L453.10 168.67 L453.60 167.83 L454.10 166.97 L454.60 166.10 L455.10 165.22 L455.60 164.33 L456.10 163.43 L456.60 162.53 L457.10 161.61 L457.60 160.68 L458.10 159.74 L458.60 158.79 L459.10 157.83 L459.60 156.85 L460.10 155.87 L460.60 154.88 L461.10 153.87 L461.60 152.86 L462.10 151.83 L462.60 150.80 L463.10 149.75 L463.60 148.69 L464.10 147.62 L464.60 146.54 L465.10 145.45 L465.60 144.35 L466.10 143.24 L466.60 142.11 L467.10 140.98 L467.60 139.83 L468.10 138.67 L468.60 137.50 L469.10 136.32 L469.60 135.13 L470.10 133.93 L470.60 132.71 L471.10 131.48 L471.60 130.25 L472.10 128.99 L472.60 127.73 L473.10 126.46 L473.60 125.17 L474.10 123.88 L474.60 122.57 L475.10 121.25 L475.60 119.91 L476.10 118.57 L476.60 117.21 L477.10 115.84 L477.60 114.46 L478.10 113.06 L478.60 111.66 L479.10 110.24 L479.60 108.81 L480.10 107.37 L480.60 105.91 L481.10 104.44 L481.60 102.96 L482.10 101.47 L482.60 99.96 L483.10 98.45 L483.60 96.92 L484.10 95.37 L484.60 93.82 L485.10 92.25 L485.60 90.66 L486.10 89.07 L486.60 87.46 L487.10 85.84 L487.60 84.21 L488.10 82.56 L488.60 80.90 L489.10 79.23 L489.60 77.54 L490.10 75.84 L490.60 74.13 L491.10 72.40 L491.60 70.66 L492.10 68.91 L492.60 67.14 L493.10 65.36 L493.60 63.57 L494.10 61.76 L494.60 59.94 L495.10 58.11 L495.60 56.26 L496.10 54.40 L496.60 52.52 L497.10 50.63 L497.60 48.73 L498.10 46.81 L498.60 44.88 L499.10 42.94 L499.60 40.98 L500.10 39.00 L500.60 37.02 L501.10 35.01 L501.60 33.00 L502.10 30.97 L502.60 28.92 L503.10 26.86 L503.60 24.79 L504.10 22.70 L504.60 20.60 L505.10 18.48 L505.60 16.35 L506.10 14.21 L506.60 12.04 L507.10 9.87 L507.60 7.68 L508.10 5.47 L508.60 3.25 L509.10 1.02 L509.60 -1.23 L510.10 -3.50 L510.60 -5.78 L511.10 -8.07 L511.60 -10.38 L512.10 -12.71 L512.60 -15.05 L513.10 -17.40 L513.60 -19.78 L514.10 -22.16 L514.60 -24.56" stroke="#0c5a0c" stroke-width="1.45" fill="none"/></svg>
<div class="ln" style="left:0;top:662px;width:760px;height:1px"></div>
<svg style="left:760px;top:360px" width="10" height="16"><path d="M2.3 8.3 L7.5 3.2 L7.5 13.6 Z" fill="none" stroke="#404040" stroke-width="1"/></svg>
<div class="t" style="left:11px;top:671px;font-size:12px;color:#0c0c24">Input:</div>
<div class="a" style="left:44px;top:666px;width:656px;height:21px;background:#fff;border-top:1px solid #000;border-left:1px solid #000;border-right:1px solid #fff;border-bottom:1px solid #fff"><div class="a" style="left:0;top:0;right:0;bottom:0;border-right:1px solid #d0d0d0;border-bottom:1px solid #d0d0d0"></div></div>
<svg style="left:687px;top:670px" width="8" height="13"><path d="M4 0.6 L7 4.8 L1 4.8 Z M4 11.8 L7 7.4 L1 7.4 Z" fill="#404040"/></svg>
<svg style="left:717px;top:669px" width="14" height="14"><circle cx="7" cy="7" r="5.6" fill="none" stroke="#a4a4a4" stroke-width="1" stroke-dasharray="3 1"/></svg>
<div class="t" style="left:721.2px;top:671.5px;font-size:9.5px;font-weight:bold;color:#a8a8a8">?</div>
<div class="a" style="left:0;top:691px;width:772px;height:1px;background:#808080"></div>
</body></html>
